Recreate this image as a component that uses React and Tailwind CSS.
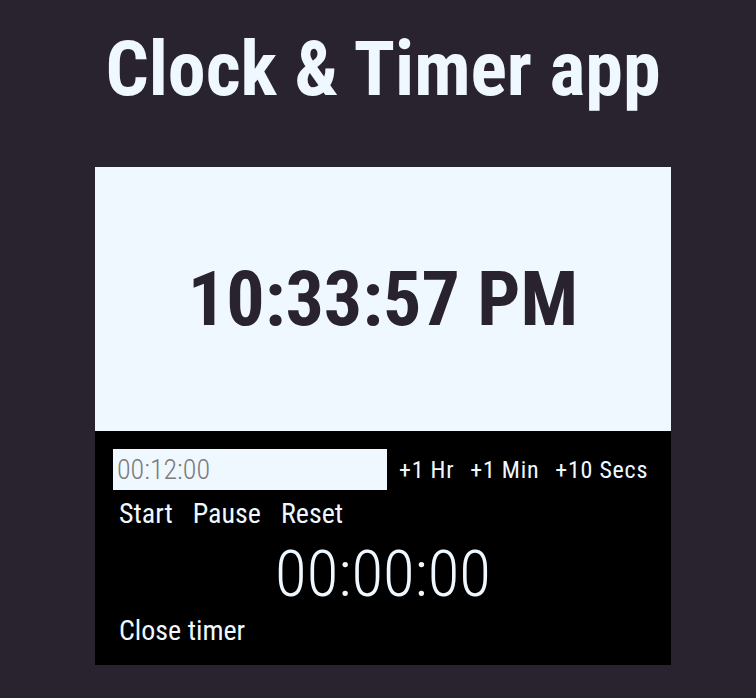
export default function App() {
  const font = "font-['Roboto_Condensed','Open_Sans',sans-serif] font-stretch-condensed";
  const topBtn = "px-[6px] py-[1px] text-[24px] leading-[30px] tracking-[0.75px]";
  const btn = "px-[6px] py-[1px] text-[28px] leading-[30px]";
  return (
    <div className={`min-h-[698px] w-full bg-[#29232f] ${font} flex flex-col items-center pl-[10px]`}>
      <h1 className="mt-[31px] text-[76px] leading-none font-bold text-[#f0f8ff] whitespace-nowrap">
        Clock &amp; Timer app
      </h1>
      <div className="mt-[60px] w-[576px] flex flex-col">
        <div className="h-[264px] bg-[#f0f8ff] flex items-center justify-center">
          <span className="text-[76px] leading-none font-bold text-[#29232f] whitespace-nowrap">10:33:57 PM</span>
        </div>
        <div className="bg-black pt-[18px] px-[18px] pb-[18px] flex flex-col text-[#f0f8ff]">
          <div className="flex items-center h-[41px]">
            <input
              type="text"
              placeholder="00:12:00"
              className="w-[274px] h-[41px] shrink-0 bg-[#f0f8ff] pl-[4px] text-[28px] font-light text-[#29232f] placeholder:text-[#7b7b7b] outline-none"
            />
            <div className="flex items-center gap-[4px] ml-[6px] whitespace-nowrap">
              <button className={topBtn}>+1 Hr</button>
              <button className={topBtn}>+1 Min</button>
              <button className={topBtn}>+10 Secs</button>
            </div>
          </div>
          <div className="mt-[8px] flex items-center gap-[8px] whitespace-nowrap">
            <button className={btn}>Start</button>
            <button className={btn}>Pause</button>
            <button className={btn}>Reset</button>
          </div>
          <div className="mt-[12px] text-center text-[65px] leading-none font-light">00:00:00</div>
          <div className="mt-[8px] flex">
            <button className={btn}>Close timer</button>
          </div>
        </div>
      </div>
    </div>
  );
}
